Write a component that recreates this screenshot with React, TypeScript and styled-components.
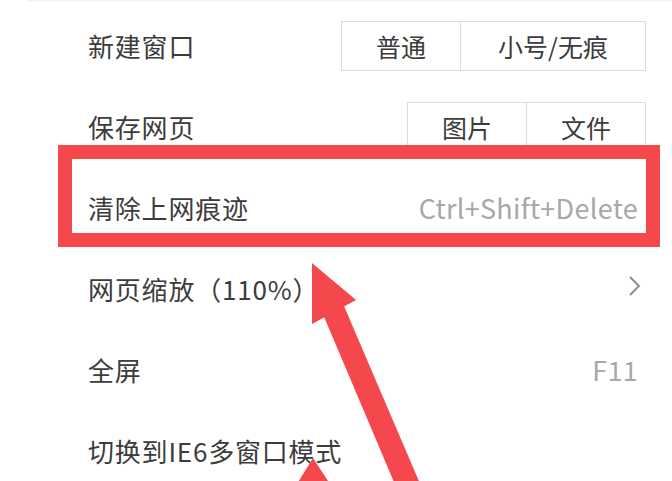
import styled, { createGlobalStyle } from "styled-components";

const GlobalStyle = createGlobalStyle`
  html, body {
    margin: 0;
    padding: 0;
    background: #ffffff;
  }
  body {
    font-family: "Noto Sans CJK SC", "Noto Sans", sans-serif;
  }
`;

type MenuItem = {
  label: string;
  buttons?: string[];
  shortcut?: string;
  submenu?: boolean;
};

const items: MenuItem[] = [
  { label: "新建窗口", buttons: ["普通", "小号/无痕"] },
  { label: "保存网页", buttons: ["图片", "文件"] },
  { label: "清除上网痕迹", shortcut: "Ctrl+Shift+Delete" },
  { label: "网页缩放（110%）", submenu: true },
  { label: "全屏", shortcut: "F11" },
  { label: "切换到IE6多窗口模式" },
];

export default function App() {
  return (
    <>
      <GlobalStyle />
      <Page>
        <Menu>
          {items.map((item) => (
            <Row key={item.label}>
              <Label>{item.label}</Label>
              {item.buttons && (
                <ButtonGroup>
                  {item.buttons.map((b) => (
                    <GroupButton key={b} $wide={b.length > 2}>
                      {b}
                    </GroupButton>
                  ))}
                </ButtonGroup>
              )}
              {item.shortcut && <Shortcut>{item.shortcut}</Shortcut>}
              {item.submenu && (
                <Chevron viewBox="0 0 14 22" width="14" height="22">
                  <polyline
                    points="2,2 11,11 2,20"
                    fill="none"
                    stroke="#8a8a8a"
                    strokeWidth="1.8"
                  />
                </Chevron>
              )}
            </Row>
          ))}
        </Menu>

        <Highlight />

        <Annotation viewBox="0 0 672 481" width="672" height="481">
          <polygon points="312,263 356,300 312,324" fill="#f4484c" />
          <polygon points="322,312 344,306 421,486 399,494" fill="#f4484c" />
          <polygon points="313,458 330,484 297,484" fill="#f4484c" />
        </Annotation>
      </Page>
    </>
  );
}

const Page = styled.div`
  position: relative;
  width: 672px;
  height: 481px;
  overflow: hidden;
  background: #ffffff;
`;

const Menu = styled.div`
  display: flex;
  flex-direction: column;
  margin-left: 28px;
  padding: 4px 26px 0 60px;
  border-top: 1px solid #f0f0f0;
`;

const Row = styled.div`
  display: flex;
  align-items: center;
  justify-content: space-between;
  height: 81px;
`;

const Label = styled.span`
  font-size: 26px;
  color: #3c3c3c;
  letter-spacing: 0.8px;
  white-space: nowrap;
`;

const ButtonGroup = styled.div`
  display: flex;
  height: 50px;
  border: 1px solid #dcdcdc;
  box-sizing: border-box;
`;

const GroupButton = styled.div<{ $wide?: boolean }>`
  display: flex;
  align-items: center;
  justify-content: center;
  width: ${({ $wide }) => ($wide ? "184px" : "118px")};
  font-size: 25px;
  color: #3c3c3c;
  & + & {
    border-left: 1px solid #dcdcdc;
  }
`;

const Shortcut = styled.span`
  font-size: 27px;
  letter-spacing: 0.3px;
  color: #a8a8a8;
  margin-right: 8px;
  white-space: nowrap;
`;

const Chevron = styled.svg`
  display: block;
  margin-right: 4px;
  margin-top: -6px;
`;

const Highlight = styled.div`
  position: absolute;
  left: 58px;
  top: 145px;
  width: 602px;
  height: 102px;
  box-sizing: border-box;
  border: 14px solid #f4484c;
  pointer-events: none;
`;

const Annotation = styled.svg`
  position: absolute;
  left: 0;
  top: 0;
  pointer-events: none;
`;
